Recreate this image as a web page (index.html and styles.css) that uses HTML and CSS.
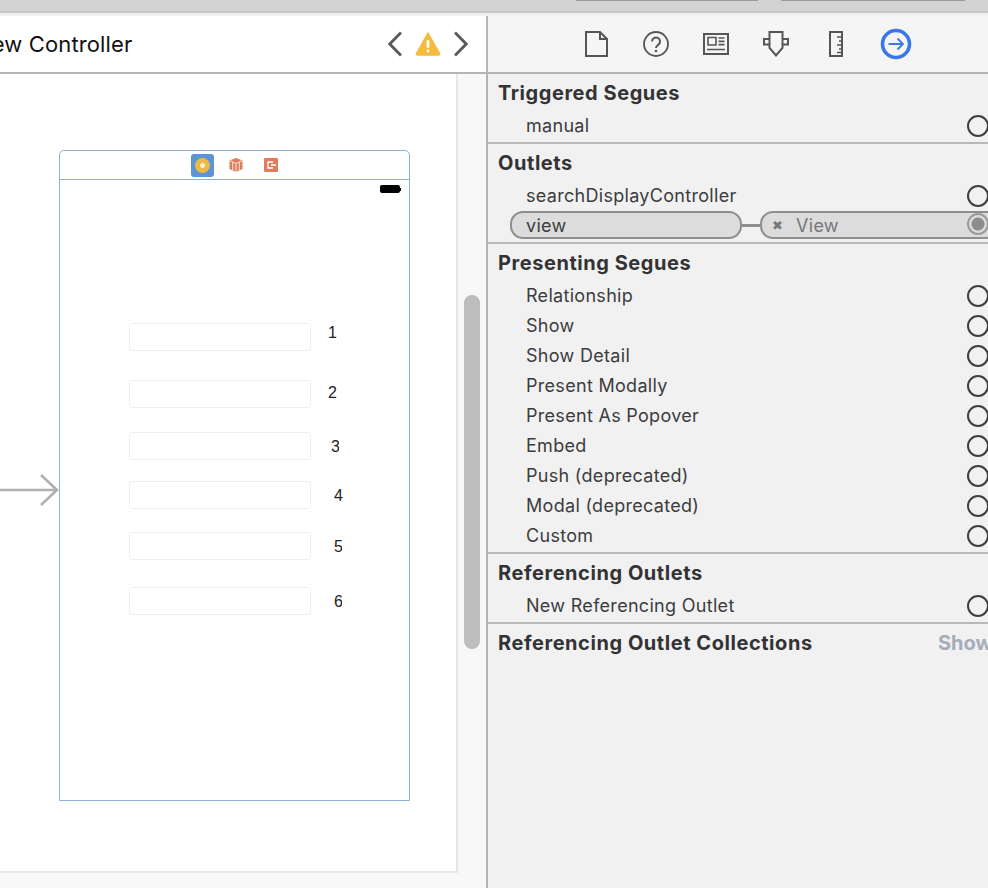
FILE: index.html
```html
<!DOCTYPE html>
<html lang="en">
<head>
<meta charset="utf-8">
<title>View Controller</title>
<link rel="stylesheet" href="styles.css">
</head>
<body>
<div class="topbar">
  <span class="toptab toptab-a"></span>
  <span class="toptab toptab-b"></span>
</div>
<div class="main">
  <section class="editor">
    <header class="editor-head">
      <div class="title">View Controller</div>
      <nav class="nav">
        <svg width="14" height="26" viewBox="0 0 14 26"><path d="M13 1.500 1.800 13 13 24.500" fill="none" stroke="#59595b" stroke-width="2.800"/></svg>
        <svg width="26" height="26" viewBox="0 0 26 26"><path d="M13 2 24.500 22.500a1 1 0 0 1-1 1.500h-21a1 1 0 0 1-1-1.500z" fill="#f5bb3c" stroke="#f5bb3c" stroke-width="1.500" stroke-linejoin="round"/><rect x="11.600" y="9" width="2.800" height="8" rx="1.400" fill="#fff"/><circle cx="13" cy="20" r="1.500" fill="#fff"/></svg>
        <svg width="14" height="26" viewBox="0 0 14 26"><path d="M1 1.500 12.200 13 1 24.500" fill="none" stroke="#59595b" stroke-width="2.800"/></svg>
      </nav>
    </header>
    <div class="workspace">
      <div class="canvas">
        <svg class="entry" width="60" height="34" viewBox="0 0 60 34"><path d="M0 17H57M41 2 57 17 41 32" fill="none" stroke="#b0b0b0" stroke-width="2.600"/></svg>
        <div class="scene">
          <div class="scene-bar">
            <span class="vc-icon"><span class="vc-disc"></span></span>
            <svg width="16" height="16" viewBox="0 0 16 16"><path d="M8 1 14.500 3.500V12L8 15 1.500 12V3.500z" fill="#df7c5a"/><path d="M1.500 3.500 8 6.500 14.500 3.500M8 6.500V15M4.700 5v8.500M11.300 5v8.500" fill="none" stroke="#fbe3d9" stroke-width="1"/></svg>
            <svg width="16" height="16" viewBox="0 0 16 16"><rect x="1" y="1" width="14" height="14" rx="1" fill="#e27d5c"/><path d="M10 5H5v6h5" fill="none" stroke="#fff" stroke-width="1.300"/><path d="M8 8h5" stroke="#fff" stroke-width="1.600"/></svg>
          </div>
          <div class="status"><span class="battery"></span><span class="battery-tip"></span></div>
          <div class="field f1"></div><span class="num n1">1</span>
          <div class="field f2"></div><span class="num n2">2</span>
          <div class="field f3"></div><span class="num n3">3</span>
          <div class="field f4"></div><span class="num n4">4</span>
          <div class="field f5"></div><span class="num n5">5</span>
          <div class="field f6"></div><span class="num n6">6</span>
        </div>
      </div>
      <div class="track"><div class="thumb"></div></div>
    </div>
  </section>
  <aside class="inspector">
    <header class="tabs">
      <svg width="23" height="26" viewBox="0 0 23 26"><path d="M1 1H15L22 8V25H1zM15 1V8H22" fill="none" stroke="#565658" stroke-width="2"/></svg>
      <svg width="26" height="26" viewBox="0 0 26 26"><circle cx="13" cy="13" r="12" fill="none" stroke="#565658" stroke-width="1.800"/><path d="M9 10.500a4 4 0 1 1 6.200 3.300C13.800 14.800 13 15.500 13 17" fill="none" stroke="#565658" stroke-width="2"/><circle cx="13" cy="20" r="1.300" fill="#565658"/></svg>
      <svg width="26" height="22" viewBox="0 0 26 22"><path d="M1 1H25V21H1z" fill="none" stroke="#565658" stroke-width="2"/><path d="M5 4.500H13V12H5z" fill="none" stroke="#565658" stroke-width="1.600"/><path d="M15.500 5h6M15.500 8.300h6M15.500 11.600h6M4 16.500h18" stroke="#565658" stroke-width="1.700"/></svg>
      <svg width="26" height="26" viewBox="0 0 26 26"><path d="M6.500 1H19.500V17L13 24.500 6.500 17zM6.500 8H1V13.500H6.500M19.500 8H25V13.500H19.500" fill="none" stroke="#565658" stroke-width="2"/></svg>
      <svg width="14" height="26" viewBox="0 0 14 26"><path d="M1 1H13V25H1z" fill="none" stroke="#565658" stroke-width="2"/><path d="M8 6H13M10 10H13M8 14H13M10 18H13M8 21.500H13" stroke="#565658" stroke-width="1.500"/></svg>
      <svg width="32" height="32" viewBox="0 0 32 32"><circle cx="16" cy="16" r="13.500" fill="none" stroke="#3b78e7" stroke-width="3.600"/><path d="M8.500 16H23M17.500 10.500 23 16l-5.500 5.500" fill="none" stroke="#3b78e7" stroke-width="1.800"/></svg>
    </header>
    <section class="group">
      <h2 class="group-title">Triggered Segues</h2>
      <div class="row"><span>manual</span><i class="well"></i></div>
    </section>
    <section class="group">
      <h2 class="group-title">Outlets</h2>
      <div class="row"><span>searchDisplayController</span><i class="well"></i></div>
      <div class="row row-linked">
        <span class="pill pill-name">view</span>
        <span class="link"></span>
        <span class="pill pill-target"><span class="x">✖</span><span class="target-name">View</span><i class="well well-on"></i></span>
      </div>
    </section>
    <section class="group">
      <h2 class="group-title">Presenting Segues</h2>
      <div class="row"><span>Relationship</span><i class="well"></i></div>
      <div class="row"><span>Show</span><i class="well"></i></div>
      <div class="row"><span>Show Detail</span><i class="well"></i></div>
      <div class="row"><span>Present Modally</span><i class="well"></i></div>
      <div class="row"><span>Present As Popover</span><i class="well"></i></div>
      <div class="row"><span>Embed</span><i class="well"></i></div>
      <div class="row"><span>Push (deprecated)</span><i class="well"></i></div>
      <div class="row"><span>Modal (deprecated)</span><i class="well"></i></div>
      <div class="row"><span>Custom</span><i class="well"></i></div>
    </section>
    <section class="group">
      <h2 class="group-title">Referencing Outlets</h2>
      <div class="row"><span>New Referencing Outlet</span><i class="well"></i></div>
    </section>
    <section class="group group-last">
      <h2 class="group-title">Referencing Outlet Collections</h2>
      <span class="show">Show</span>
    </section>
  </aside>
</div>
</body>
</html>
```
FILE: styles.css
```css
* { box-sizing: border-box; }
html, body { margin: 0; height: 100%; overflow: hidden; }
body {
  width: 988px;
  height: 888px;
  display: flex;
  flex-direction: column;
  background: #f1f1f1;
  font-family: Inter, "Liberation Sans", sans-serif;
  color: #3a3a3c;
}
.topbar {
  height: 16px;
  flex: none;
  background: #d3d3d3;
  border-bottom: 3px solid #f0f0f0;
  box-shadow: inset 0 -2px 0 #c8c8c8;
  position: relative;
}
.toptab { position: absolute; top: 0; height: 1px; background: #9b9b9b; }
.toptab-a { left: 576px; width: 182px; }
.toptab-b { left: 781px; width: 184px; }
.main { flex: 1; display: flex; min-height: 0; }

.editor {
  width: 488px;
  flex: none;
  display: flex;
  flex-direction: column;
  border-right: 2px solid #b4b4b4;
  background: #f8f8f8;
}
.editor-head {
  height: 58px;
  flex: none;
  background: #fff;
  border-bottom: 2px solid #b4b4b4;
  display: flex;
  align-items: center;
  justify-content: space-between;
  padding-right: 18px;
  overflow: hidden;
}
.title {
  margin-left: -29px;
  font-size: 22px;
  letter-spacing: 0.13px;
  color: #111;
  white-space: nowrap;
}
.nav { display: flex; align-items: center; gap: 13px; }
.workspace { flex: 1; display: flex; min-height: 0; }
.canvas {
  width: 458px;
  height: 799px;
  flex: none;
  background: #fff;
  border-right: 2px solid #e8e8e8;
  border-bottom: 2px solid #e8e8e8;
  position: relative;
  overflow: hidden;
}
.track { flex: 1; padding: 221px 6px 0 6px; background: #f8f8f8; }
.thumb { height: 354px; width: 16px; border-radius: 8px; background: #bdbdbd; }
.entry { position: absolute; left: 0; top: 399px; }
.scene {
  position: absolute;
  left: 59px;
  top: 76px;
  width: 351px;
  height: 651px;
  border: 1px solid #8fb0d6;
  border-radius: 5px 5px 0 0;
  background: #fff;
}
.scene-bar {
  height: 29px;
  border-bottom: 1px solid #8fb0d6;
  display: flex;
  align-items: center;
  justify-content: center;
  gap: 19px;
}
.vc-icon {
  width: 23px;
  height: 23px;
  margin-right: -5px;
  border-radius: 3px;
  background: #5e94d6;
  display: flex;
  align-items: center;
  justify-content: center;
}
.vc-disc {
  width: 15px;
  height: 15px;
  border-radius: 50%;
  background: radial-gradient(circle, #fff3c4 0 2px, #edb84a 3px);
}
.status { display: flex; justify-content: flex-end; align-items: center; height: 18px; padding-right: 8px; }
.battery { width: 20px; height: 8px; border-radius: 2px; background: #000; }
.battery-tip { width: 1px; height: 3px; background: #000; }
.field {
  position: absolute;
  left: 69px;
  width: 182px;
  height: 28px;
  border: 1px solid #efefef;
  border-radius: 3px;
  background: #fff;
}
.f1 { top: 172px; }
.f2 { top: 229px; }
.f3 { top: 281px; }
.f4 { top: 330px; }
.f5 { top: 381px; }
.f6 { top: 436px; }
.num {
  position: absolute;
  width: 10px;
  height: 18px;
  overflow: hidden;
  font: 16px/18px "Liberation Sans", sans-serif;
  color: #222;
}
.n1 { left: 268px; top: 173px; }
.n2 { left: 268px; top: 233px; }
.n3 { left: 271px; top: 287px; width: 8px; }
.n4 { left: 274px; top: 336px; }
.n5 { left: 274px; top: 387px; width: 8px; }
.n6 { left: 274px; top: 442px; width: 8px; }

.inspector { flex: 1; min-width: 0; overflow: hidden; }
.tabs {
  height: 58px;
  background: #f5f5f5;
  border-bottom: 2px solid #b4b4b4;
  display: grid;
  grid-template-columns: repeat(6, 60px);
  justify-items: center;
  align-items: center;
  padding-left: 78px;
}
.group {
  position: relative;
  border-bottom: 2px solid #b9b9b9;
}
.group-last { border-bottom: 0; }
.group-title {
  margin: 0;
  height: 38px;
  padding-left: 10px;
  font-size: 20px;
  line-height: 38px;
  letter-spacing: 0.55px;
  font-weight: 700;
  color: #333335;
  white-space: nowrap;
}
.row {
  height: 30px;
  display: flex;
  align-items: center;
  justify-content: space-between;
  padding: 0 0 4px 38px;
  font-size: 18px;
  letter-spacing: 0.3px;
  color: #3c3c3e;
  position: relative;
}
.well {
  position: absolute;
  left: 479px;
  top: 3px;
  width: 22px;
  height: 22px;
  border: 2px solid #3f3f41;
  border-radius: 50%;
  background: #f1f1f1;
}
.row-linked { padding-left: 22px; justify-content: flex-start; }
.pill {
  height: 28px;
  border: 2px solid #8e8e8e;
  background: #dcdcdc;
  border-radius: 13px;
  display: flex;
  align-items: center;
}
.pill-name { width: 232px; padding-left: 14px; flex: none; }
.link { width: 18px; height: 3px; background: #8e8e8e; flex: none; }
.pill-target { width: 260px; flex: none; padding-left: 10px; color: #76767a; position: relative; }
.x { font-size: 13px; width: 24px; color: #77777a; }
.well-on {
  top: 0;
  left: 205px;
  border-color: #9a9a9a;
  background: radial-gradient(circle, #8d8d8d 0 6px, #dcdcdc 7px);
}
.show {
  position: absolute;
  left: 450px;
  top: 0;
  line-height: 38px;
  font-size: 20px;
  font-weight: 700;
  color: #a4aeb8;
}
```
